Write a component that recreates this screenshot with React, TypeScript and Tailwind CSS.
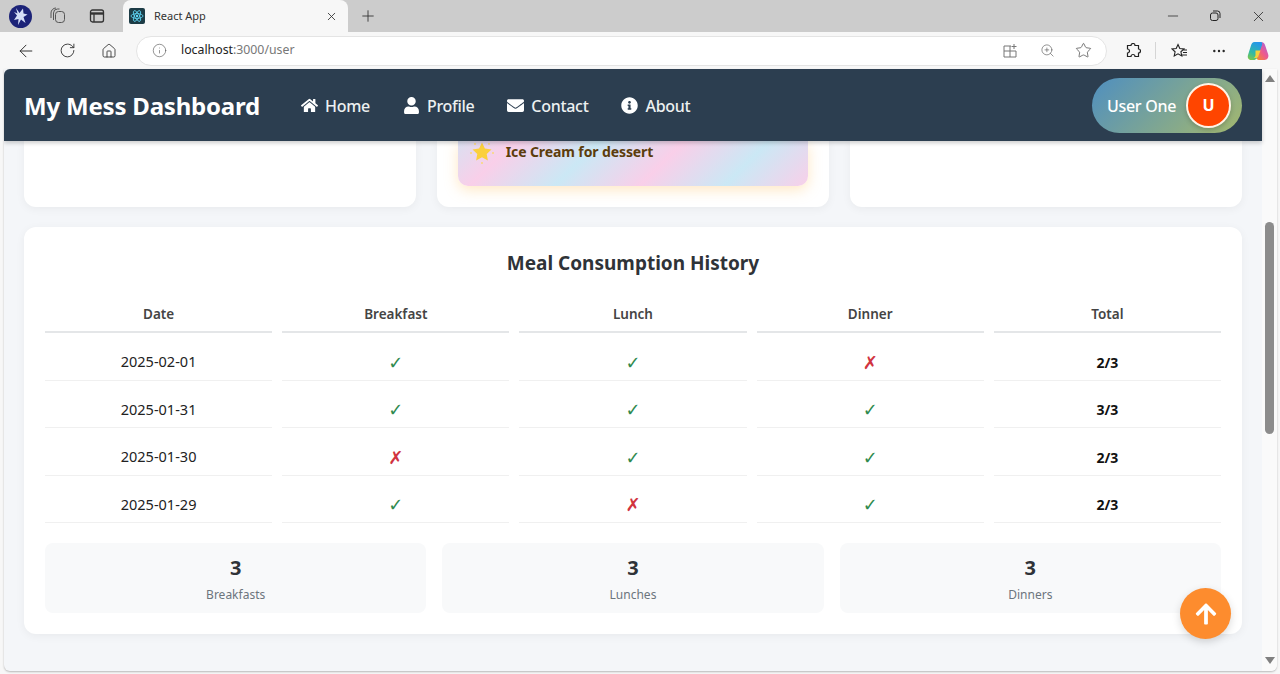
import { ArrowLeft, RotateCw, Home, Info, Star, ZoomIn, X, Plus, Minus, MoreHorizontal } from "lucide-react";
import { FaArrowUp, FaEnvelope, FaHome, FaInfoCircle, FaUser } from "react-icons/fa";

const sans = "font-['Noto_Sans','Open_Sans',sans-serif]";

const navLinks = [
  { label: "Home", icon: FaHome },
  { label: "Profile", icon: FaUser },
  { label: "Contact", icon: FaEnvelope },
  { label: "About", icon: FaInfoCircle },
];

const history = [
  { date: "2025-02-01", meals: [true, true, false], total: "2/3" },
  { date: "2025-01-31", meals: [true, true, true], total: "3/3" },
  { date: "2025-01-30", meals: [false, true, true], total: "2/3" },
  { date: "2025-01-29", meals: [true, false, true], total: "2/3" },
];

const totals = [
  { value: 3, label: "Breakfasts" },
  { value: 3, label: "Lunches" },
  { value: 3, label: "Dinners" },
];

function BrowserChrome() {
  return (
    <div className="shrink-0">
      {/* tab strip */}
      <div className="flex h-8 items-center bg-[#cccccc]">
        <div className="ml-[9px] flex w-[114px] items-center">
          <svg width="23" height="23" viewBox="0 0 23 23">
            <circle cx="11.5" cy="11.5" r="11.5" fill="#1c2378" />
            <path d="M7 3l3.500 5L14 3.500l.5 5 4 1-4 2.500 2 6-4.500-3.500L9 20l.5-6-4.500 1 3-4.500L5 7l3.500 1.500z" fill="#d5def8" />
          </svg>
          <svg className="ml-[17px] text-[#555]" width="18" height="18" viewBox="0 0 18 18" fill="none" stroke="currentColor" strokeWidth="1">
            <rect x="6.500" y="4.500" width="9" height="11" rx="3" />
            <path d="M4.500 13V6a4 4 0 0 1 4-4h2M2 11V6a5 5 0 0 1 5-5" />
          </svg>
          <svg className="ml-[22px] text-[#333]" width="16" height="16" viewBox="0 0 16 16" fill="none" stroke="currentColor" strokeWidth="1.3">
            <rect x="1.500" y="2" width="13" height="12" rx="2" />
            <path d="M1.500 5.500h13" strokeWidth="2.400" />
            <path d="M5 6v8" />
          </svg>
        </div>
        <div className="flex h-8 w-[225px] items-center rounded-t-lg bg-[#f7f7f7] pl-[6px] pr-2">
          <svg width="16" height="16" viewBox="0 0 16 16">
            <rect width="16" height="16" rx="2" fill="#1d3c46" />
            <g fill="none" stroke="#61dafb" strokeWidth="0.8">
              <ellipse cx="8" cy="8" rx="6" ry="2.400" />
              <ellipse cx="8" cy="8" rx="6" ry="2.400" transform="rotate(60 8 8)" />
              <ellipse cx="8" cy="8" rx="6" ry="2.400" transform="rotate(120 8 8)" />
            </g>
            <circle cx="8" cy="8" r="1.200" fill="#61dafb" />
          </svg>
          <span className={`ml-[9px] text-[11px] text-[#333] ${sans}`}>React App</span>
          <X size={13} strokeWidth={1.6} className="ml-auto mr-[2px] text-[#333]" />
        </div>
        <Plus size={18} strokeWidth={1.2} className="ml-[11px] text-[#333]" />
        <div className="ml-auto flex items-center text-[#222]">
          <Minus size={16} strokeWidth={1.1} />
          <svg className="ml-[28px]" width="12" height="12" viewBox="0 0 12 12" fill="none" stroke="currentColor" strokeWidth="1">
            <rect x="1.500" y="3" width="7.500" height="7.500" rx="2" />
            <path d="M4 1h4.500A2.500 2.500 0 0 1 11 3.500V8" />
          </svg>
          <X size={17} strokeWidth={1.1} className="ml-[29px] mr-[13px]" />
        </div>
      </div>
      {/* toolbar */}
      <div className="flex h-[37px] items-center bg-[#f7f7f7]">
        <ArrowLeft size={20} strokeWidth={1.2} className="ml-[16px] text-[#333]" />
        <RotateCw size={17} strokeWidth={1.3} className="ml-[23px] text-[#333]" />
        <Home size={16} strokeWidth={1.3} className="ml-[25px] text-[#333]" />
        <div className="ml-[19px] flex h-[30px] w-[971px] items-center rounded-full border border-[#e4e4e4] bg-white">
          <Info size={15} strokeWidth={1} className="ml-[15px] text-[#555]" />
          <span className={`ml-[14px] text-[12.300px] text-[#222] ${sans}`}>
            localhost<span className="text-[#777]">:3000/user</span>
          </span>
          <svg className="ml-auto text-[#777]" width="16" height="16" viewBox="0 0 16 16" fill="none" stroke="currentColor" strokeWidth="1">
            <path d="M9 3H2v11h12V8H2M8 3v11M12 1v5M9.500 3.500h5" />
          </svg>
          <ZoomIn size={15} strokeWidth={1} className="ml-[22px] text-[#555]" />
          <Star size={17} strokeWidth={1} className="ml-[20px] mr-[14px] text-[#444]" />
        </div>
        <svg className="ml-[18px] text-[#222]" width="16" height="16" viewBox="0 0 16 16" fill="none" stroke="currentColor" strokeWidth="1.2">
          <path d="M6 2.500a2 2 0 0 1 4 0h3.500V6a2 2 0 0 1 0 4v3.500H10a2 2 0 0 0-4 0H2.500V10a2 2 0 0 0 0-4V2.500z" />
        </svg>
        <div className="ml-[14px] h-[17px] w-px bg-[#d5d5d5]" />
        <svg className="ml-[15px] text-[#222]" width="17" height="16" viewBox="0 0 17 16" fill="none" stroke="currentColor" strokeWidth="1.1">
          <path d="M7 1.500l1.800 4 4.200.4-3.100 2.900.9 4.200L7 10.800 3.200 13l.9-4.200L1 5.900l4.200-.4zM12 7h4M12 9.500h4M11 12h5" />
        </svg>
        <MoreHorizontal size={16} strokeWidth={1.6} className="ml-[23px] text-[#222]" />
        <svg className="ml-[20px]" width="22" height="20" viewBox="0 0 22 20">
          <defs>
            <linearGradient id="cpA" x1="0.600" y1="0" x2="0.200" y2="1">
              <stop offset="0" stopColor="#2596ea" />
              <stop offset="0.600" stopColor="#2fb9a8" />
              <stop offset="1" stopColor="#7cc84a" />
            </linearGradient>
            <linearGradient id="cpB" x1="0.100" y1="1" x2="0.900" y2="0">
              <stop offset="0" stopColor="#f28a2e" />
              <stop offset="0.450" stopColor="#ee5a8d" />
              <stop offset="1" stopColor="#a463e0" />
            </linearGradient>
          </defs>
          <path d="M14 1c2.500 0 3.500 1.500 4.200 3.500l3 9c.8 2.500-.8 5.500-3.700 5.500H12c-2 0-2.600-1.500-2-3.500l4-11c.4-1.500.2-3.500 0-3.500z" fill="url(#cpB)" />
          <path d="M7.500 1H14c1.200 0 1.500 1.500 1 3L11.500 14c-.8 2.500-2 5-5 5H4C1.500 19 .2 16.500 1 14L4 4.500C4.700 2.500 5.500 1 7.500 1z" fill="url(#cpA)" />
          <path d="M8.500 9.500h5L11.500 15c-.5 1.500-1.500 2-2.500 2H6.500c1 0 1.500-1 2-2.500z" fill="#f5cf3c" />
        </svg>
      </div>
    </div>
  );
}

function Navbar() {
  return (
    <nav className="relative z-10 flex h-[72px] shrink-0 items-center rounded-tl-md bg-[#2c3e50] pl-5 pr-5 shadow-[0_2px_4px_rgba(0,0,0,0.2)]">
      <span className="mt-[2px] text-[24px] font-bold tracking-[-0.2px] text-white">My Mess Dashboard</span>
      <div className="ml-[41px] mt-[1px] flex items-center gap-[33px]">
        {navLinks.map((l) => (
          <a key={l.label} className="flex items-center gap-[7px] text-[16px] font-medium tracking-[-0.3px] text-[#ecf0f1]">
            <l.icon size={17} className="text-white" />
            {l.label}
          </a>
        ))}
      </div>
      <div className="ml-auto flex h-[55px] w-[150px] items-center rounded-full bg-[linear-gradient(135deg,#4f8fc0,#a4b86e)] pl-[15px]">
        <span className="mt-[1px] text-[16px] font-medium tracking-[-0.3px] text-white">User One</span>
        <div className="ml-auto mr-[11px] flex h-[45px] w-[45px] items-center justify-center rounded-full border-2 border-[#fff3e6] bg-[#ff4500] text-[16px] font-bold text-white shadow-[0_2px_5px_rgba(0,0,0,0.2)]">
          U
        </div>
      </div>
    </nav>
  );
}

function HistoryTable() {
  const heads = ["Date", "Breakfast", "Lunch", "Dinner", "Total"];
  const cell = "flex h-[37.500px] items-center justify-center border-b border-[#f0f0f0] pt-[2px]";
  return (
    <div className="grid grid-cols-5 gap-[10px]">
      {heads.map((h) => (
        <div key={h} className="h-[29px] border-b-2 border-[#e4e6e8] text-center text-[13.500px] font-semibold leading-[21px] text-[#444]">
          {h}
        </div>
      ))}
      {history.map((row) => [
        <div key={row.date} className={`${cell} text-[14.500px] text-[#222]`}>
          {row.date}
        </div>,
        ...row.meals.map((ok, i) => (
          <div
            key={row.date + i}
            className={`${cell} font-['DejaVu_Sans',sans-serif] text-[18px] ${ok ? "text-[#2f8a4e]" : "text-[#d1343f]"}`}
          >
            {ok ? "✓" : "✗"}
          </div>
        )),
        <div key={row.date + "total"} className={`${cell} text-[14px] font-bold text-[#111]`}>
          {row.total}
        </div>,
      ])}
    </div>
  );
}

export default function App() {
  return (
    <div className={`flex h-[674px] w-[1280px] flex-col overflow-hidden bg-[#f7f7f7] ${sans}`}>
      <BrowserChrome />
      <div className="mb-[3px] ml-[4px] mr-[3px] flex min-h-0 flex-1 overflow-hidden rounded-b-md bg-[#f4f6f9] shadow-[0_1px_2px_rgba(0,0,0,0.25)]">
        <div className="flex min-w-0 flex-1 flex-col">
          <Navbar />
          <div className="relative flex-1 px-5">
            {/* top cards, scrolled up under the navbar */}
            <div className="grid grid-cols-3 gap-[21.500px]">
              <div className="h-[66px] rounded-b-xl bg-white shadow-[0_2px_10px_rgba(0,0,0,0.05)]" />
              <div className="h-[66px] rounded-b-xl bg-white px-[20.500px] shadow-[0_2px_10px_rgba(0,0,0,0.05)]">
                <div className="flex h-[45px] items-start rounded-b-[10px] bg-[repeating-linear-gradient(135deg,#cbe8f5_-20px,#f9cfe9_40px,#cbe8f5_100px)] pl-[12px] shadow-[0_4px_14px_rgba(255,190,90,0.35)]">
                  <svg className="-mt-[1px]" width="24" height="24" viewBox="0 0 24 24">
                    <path d="M12 2.500l2.900 6 6.600.9-4.800 4.600 1.200 6.500L12 17.300l-5.900 3.200 1.200-6.500L2.500 9.400l6.600-.9z" fill="#fbd03c" />
                    <g fill="#fbd878">
                      <circle cx="12" cy="23" r="1" />
                      <circle cx="1" cy="13" r="1" />
                      <circle cx="23" cy="13" r="1" />
                      <circle cx="5" cy="4" r="1" />
                      <circle cx="19" cy="4" r="1" />
                    </g>
                  </svg>
                  <span className="ml-[12px] mt-[1px] text-[14px] font-bold leading-[20px] tracking-[-0.1px] text-[#5c3d0c]">Ice Cream for dessert</span>
                </div>
              </div>
              <div className="h-[66px] rounded-b-xl bg-white shadow-[0_2px_10px_rgba(0,0,0,0.05)]" />
            </div>

            {/* history card */}
            <div className="mt-5 h-[407px] rounded-xl bg-white px-[21px] pt-[21px] shadow-[0_2px_10px_rgba(0,0,0,0.05)]">
              <h2 className="h-[31px] text-center text-[19px] font-bold leading-[31px] text-[#2f3338]">Meal Consumption History</h2>
              <div className="mt-[25px]">
                <HistoryTable />
              </div>
              <div className="mt-[20px] grid grid-cols-3 gap-4">
                {totals.map((t) => (
                  <div key={t.label} className="flex h-[70px] flex-col items-center rounded-lg bg-[#f8f9fa] pt-[11px]">
                    <span className="text-[20px] font-bold leading-[28px] text-[#2f3338]">{t.value}</span>
                    <span className="mt-[4px] text-[12px] leading-[18px] text-[#6c757d]">{t.label}</span>
                  </div>
                ))}
              </div>
            </div>

            {/* back to top */}
            <button className="absolute bottom-[32px] right-[31px] flex h-[51px] w-[51px] items-center justify-center rounded-full bg-[#fd8c2e] text-white shadow-[0_3px_8px_rgba(0,0,0,0.15)]">
              <FaArrowUp size={24} />
            </button>
          </div>
        </div>
        {/* scrollbar */}
        <div className="relative flex w-[15px] shrink-0 flex-col items-center bg-[#fafafa]">
          <div className="mt-[6px] h-0 w-0 border-x-[5px] border-b-[7px] border-x-transparent border-b-[#808080]" />
          <div className="mt-[140px] h-[212px] w-[9px] rounded-full bg-[#8c8c8c]" />
          <div className="mb-[7px] mt-auto h-0 w-0 border-x-[5px] border-t-[7px] border-x-transparent border-t-[#808080]" />
        </div>
      </div>
    </div>
  );
}
